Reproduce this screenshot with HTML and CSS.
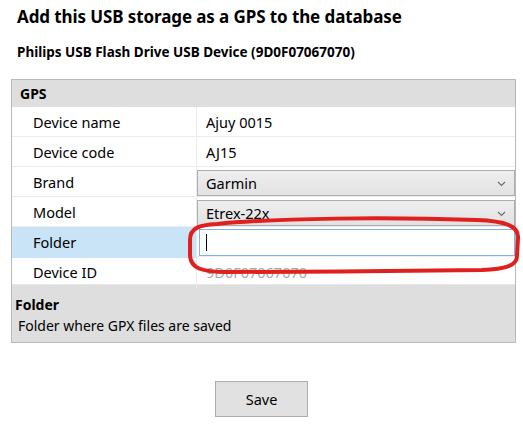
FILE: index.html
```html
<!DOCTYPE html>
<html>
<head>
<meta charset="utf-8">
<link rel="stylesheet" href="styles.css">
</head>
<body>
<div class="page">
  <h1 class="title">Add this USB storage as a GPS to the database</h1>
  <h2 class="subtitle">Philips USB Flash Drive USB Device (9D0F07067070)</h2>
  <div class="panel">
    <div class="category">GPS</div>
    <div class="rows">
      <div class="row"><div class="label">Device name</div><div class="value">Ajuy 0015</div></div>
      <div class="row"><div class="label">Device code</div><div class="value">AJ15</div></div>
      <div class="row"><div class="label">Brand</div><div class="value combo-cell"><div class="combo"><span>Garmin</span><svg class="chev" width="9" height="6" viewBox="0 0 9 6"><path d="M1 1 L4.5 4.5 L8 1" fill="none" stroke="#6d6d6d" stroke-width="1.2"/></svg></div></div></div>
      <div class="row"><div class="label">Model</div><div class="value combo-cell"><div class="combo"><span>Etrex-22x</span><svg class="chev" width="9" height="6" viewBox="0 0 9 6"><path d="M1 1 L4.5 4.5 L8 1" fill="none" stroke="#6d6d6d" stroke-width="1.2"/></svg></div></div></div>
      <div class="row selected"><div class="label">Folder</div><div class="value input-cell"><div class="input"><span class="caret"></span></div></div></div>
      <div class="row last"><div class="label">Device ID</div><div class="value muted">9D0F07067070</div></div>
      <svg class="mark" width="336" height="60" viewBox="0 0 336 60"><path d="M30 8 C90 2 200 1 290 4 C318 5 332 10 331 22 L330 40 C330 50 318 53 295 54 C220 55 120 56 40 56 C14 56 4 52 3 40 L3 24 C3 12 12 9 30 8 Z" fill="none" stroke="#e0201e" stroke-width="4"/></svg>
    </div>
    <div class="help">
      <div class="help-title">Folder</div>
      <div class="help-text">Folder where GPX files are saved</div>
    </div>
  </div>
  <div class="actions"><button class="save">Save</button></div>
</div>
</body>
</html>
```
FILE: styles.css
```css
html, body { margin: 0; padding: 0; background: #fff; }
body { font-family: "Noto Sans", "Open Sans", sans-serif; color: #000; }
.page { width: 523px; height: 438px; position: relative; }
.title { margin: 0; padding: 5px 0 0 17px; font-size: 17px; font-weight: 700; line-height: 24px; letter-spacing: -0.1px; }
.subtitle { margin: 0; padding: 14px 0 0 17px; font-size: 13.5px; font-weight: 700; line-height: 19px; letter-spacing: 0; }
.panel { margin: 17px 0 0 11px; width: 503px; border: 1px solid #b9b9b9; background: #dedede; }
.category { height: 27px; line-height: 27px; padding-left: 8px; font-size: 14px; font-weight: 700; background: #dedede; }
.rows { position: relative; background: #fff; }
.row { display: grid; grid-template-columns: 185px 1fr; height: 29px; border-bottom: 1px solid #ececec; font-size: 14.5px; }
.row.last { height: 27px; border-bottom: 1px solid #e6e6e6; }
.label { padding-left: 21px; line-height: 31px; border-right: 1px solid #ececec; }
.selected .label { background: #c8e4f6; }
.value { padding-left: 9px; line-height: 31px; }
.muted { color: #a8a8a8; }
.combo-cell, .input-cell { padding: 0; display: flex; align-items: center; }
.combo { flex: 1; height: 26px; margin-top: 1px; box-sizing: border-box; border: 1px solid #adadad; background: linear-gradient(#eeeeee, #e2e2e2); display: flex; align-items: center; justify-content: space-between; padding: 0 8px 0 8px; line-height: 26px; }
.chev { margin-top: 1px; }
.input { flex: 1; height: 27px; margin-left: 2px; box-sizing: border-box; border: 1px solid #7eb4ea; background: #fff; display: flex; align-items: center; padding-left: 6px; }
.caret { width: 1px; height: 17px; background: #000; }
.mark { position: absolute; left: 175px; top: 109px; }
.help { height: 57px; padding: 11px 0 0 3px; box-sizing: border-box; }
.help-title { font-size: 14px; font-weight: 700; line-height: 17px; }
.help-text { font-size: 14px; line-height: 20px; padding: 3px 0 0 3px; }
.actions { display: flex; justify-content: center; margin-top: 38px; }
.save { width: 93px; height: 36px; background: #e1e1e1; border: 1px solid #adadad; font-family: inherit; font-size: 14.5px; color: #000; padding: 0; }
```
